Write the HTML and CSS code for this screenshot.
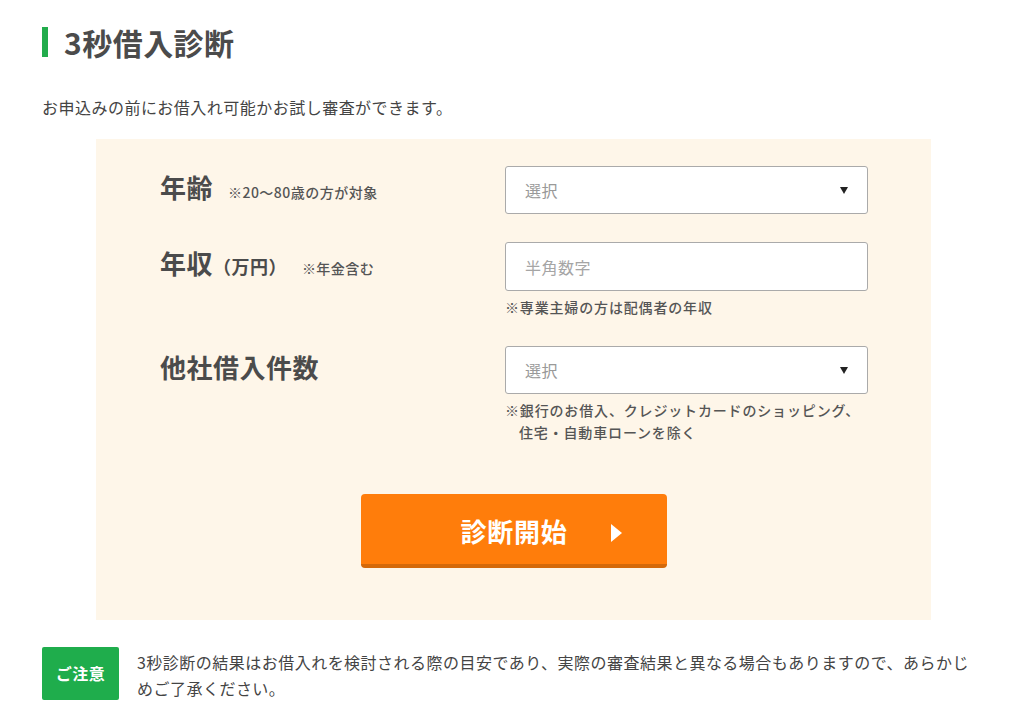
FILE: index.html
```html
<!DOCTYPE html>
<html lang="ja">
<head>
    <meta charset="UTF-8">
    <meta name="viewport" content="width=device-width, initial-scale=1.0">
    <title>3秒借入診断</title>
    <link rel="stylesheet" href="styles.css">
</head>
<body>
    <div class="container">
        <h1 class="section-title">3秒借入診断</h1>
        <p class="lead">お申込みの前にお借入れ可能かお試し審査ができます。</p>

        <form class="diagnosis" onsubmit="return false;">
            <div class="form-row">
                <div class="label-col">
                    <span class="label">年齢</span><span class="label-note">※20〜80歳の方が対象</span>
                </div>
                <div class="field-col">
                    <div class="select-wrap">
                        <select class="field" name="age">
                            <option value="">選択</option>
                        </select>
                    </div>
                </div>
            </div>

            <div class="form-row">
                <div class="label-col">
                    <span class="label">年収</span><span class="label-unit">（万円）</span><span class="label-note">※年金含む</span>
                </div>
                <div class="field-col">
                    <input class="field" type="text" name="income" placeholder="半角数字">
                    <p class="field-note">※専業主婦の方は配偶者の年収</p>
                </div>
            </div>

            <div class="form-row">
                <div class="label-col">
                    <span class="label">他社借入件数</span>
                </div>
                <div class="field-col">
                    <div class="select-wrap">
                        <select class="field" name="loans">
                            <option value="">選択</option>
                        </select>
                    </div>
                    <p class="field-note">※銀行のお借入、クレジットカードのショッピング、住宅・自動車ローンを除く</p>
                </div>
            </div>

            <div class="button-row">
                <button type="submit" class="start-btn">診断開始</button>
            </div>
        </form>

        <div class="caution">
            <div class="caution-badge">ご注意</div>
            <p class="caution-text">3秒診断の結果はお借入れを検討される際の目安であり、実際の審査結果と異なる場合もありますので、あらかじめご了承ください。</p>
        </div>
    </div>
</body>
</html>
```

FILE: styles.css
```css
* {
    margin: 0;
    padding: 0;
    box-sizing: border-box;
}

body {
    font-family: "Noto Sans CJK JP", "Noto Sans", sans-serif;
    background: #fff;
    color: #444;
    letter-spacing: 0.03em;
    padding-top: 27px;
}

.container {
    width: 943px;
    margin-left: 42px;
}

.section-title {
    font-size: 30px;
    line-height: 30px;
    font-weight: bold;
    color: #4b4b4b;
    border-left: 6px solid #22ac4c;
    padding-left: 16px;
}

.lead {
    font-size: 16px;
    line-height: 24px;
    margin-top: 38px;
}

.diagnosis {
    background: #fef6e9;
    margin: 20px 54px 0;
    padding: 27px 63px 52px 64px;
}

.form-row {
    display: flex;
    margin-bottom: 28px;
}

.label-col {
    flex: 0 0 345px;
    height: 48px;
    line-height: 42px;
    color: #4b4b4b;
}

.label {
    font-size: 26px;
    font-weight: bold;
}

.label-unit {
    font-size: 18px;
    font-weight: bold;
}

.label-note {
    font-size: 14px;
    font-weight: 500;
    margin-left: 15px;
    color: #555;
}

.field-col {
    flex: 0 0 363px;
}

.field {
    display: block;
    width: 100%;
    height: 48px;
    padding: 0 19px;
    background: #fff;
    border: 1px solid #aaa;
    border-radius: 3px;
    font-family: inherit;
    font-size: 16px;
    letter-spacing: 0.03em;
    color: #999;
    outline: none;
}

input.field {
    height: 49px;
}

.field::placeholder {
    color: #a5a5a5;
}

select.field {
    appearance: none;
    -webkit-appearance: none;
}

.select-wrap {
    position: relative;
}

/* small dark arrow on the right of the select box */
.select-wrap::after {
    content: "";
    position: absolute;
    right: 20px;
    top: 21px;
    border-top: 7px solid #222;
    border-left: 4.5px solid transparent;
    border-right: 4.5px solid transparent;
    pointer-events: none;
}

.field-note {
    font-size: 14px;
    font-weight: 500;
    line-height: 22px;
    letter-spacing: 0.06em;
    margin-top: 5px;
    padding-left: 1em;
    text-indent: -1em;
    color: #555;
}

.button-row {
    display: flex;
    justify-content: center;
    margin-top: 51px;
}

.start-btn {
    position: relative;
    width: 306px;
    height: 74px;
    padding-top: 4px;
    background: #ff7d0b;
    border: none;
    border-bottom: 4px solid #d4690a;
    border-radius: 4px;
    color: #fff;
    font-family: inherit;
    font-size: 26px;
    font-weight: bold;
    letter-spacing: 0.03em;
    line-height: 66px;
    cursor: pointer;
}

.start-btn::after {
    content: "";
    position: absolute;
    right: 45px;
    top: 30px;
    border-left: 11px solid #fff;
    border-top: 9px solid transparent;
    border-bottom: 9px solid transparent;
}

.caution {
    display: flex;
    align-items: flex-start;
    margin-top: 27px;
}

.caution-badge {
    flex: 0 0 77px;
    height: 53px;
    line-height: 53px;
    text-align: center;
    background: #1fad4c;
    color: #fff;
    font-size: 16px;
    font-weight: bold;
    border-radius: 2px;
}

.caution-text {
    margin-left: 18px;
    margin-top: 2px;
    font-size: 16px;
    line-height: 26px;
}
```
